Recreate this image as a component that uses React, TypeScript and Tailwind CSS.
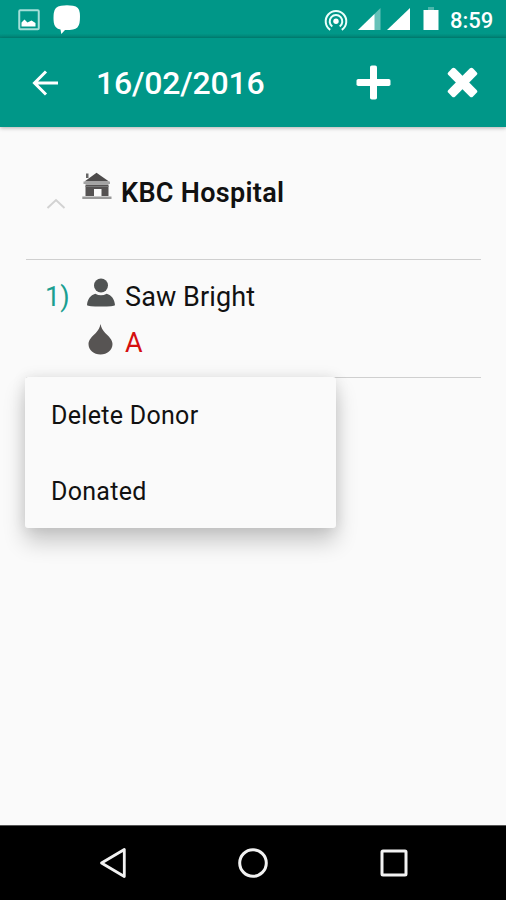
import { useState } from "react";

const menuItems = ['Delete Donor', 'Donated'];

const StatusBar = () => {
    return (
        <div className="flex h-[38px] items-start bg-linear-to-b from-[#009788] from-88% to-[#008376] pr-[12px] pl-[18px] text-white">
            <svg width="22" height="22" viewBox="0 0 22 22" className="mt-[9px]">
                <rect x="1.25" y="1.25" width="19.500" height="19" rx="1" fill="none" stroke="#a5e0d9" strokeWidth="2" />
                <path d="M3.500 17.500v-4l3-3 3 3 4-2 4 2.500v3.500z" fill="#fff" />
            </svg>
            <svg width="28" height="30" viewBox="0 0 28 30" className="mt-[5px] ml-[13px]">
                <path d="M8 .7Q14-.3 20 .7Q26.300 1.500 26.800 8Q27.300 13 26.500 18Q25.500 23.500 20 24.500Q15 25.300 12 25L8.300 29L7.500 24.500Q1.500 23.500.8 17.500Q.2 12.500.8 8Q1.500 1.700 8 .7z" fill="#fff" />
            </svg>
            <div className="grow" />
            <svg width="24" height="22" viewBox="0 0 24 22" className="mt-[9px]" fill="none" stroke="#eafffb" strokeWidth="2">
                <path d="M6.200 20.800A10.300 10.300 0 1 1 17.800 20.800" />
                <path d="M8.300 17.500A6.300 6.300 0 1 1 15.700 17.500" />
                <circle cx="12" cy="12.300" r="2.700" fill="#fff" stroke="none" />
            </svg>
            <svg width="23" height="22" viewBox="0 0 23 22" className="mt-[8px] ml-[10px]">
                <path d="M0 22L22.500 0V22z" fill="#66c1b8" />
                <path d="M0 22L16.500 6V22z" fill="#fff" />
            </svg>
            <svg width="23" height="22" viewBox="0 0 23 22" className="mt-[8px] ml-[6px]">
                <path d="M0 22L23 0V22z" fill="#fff" />
            </svg>
            <svg width="16" height="23" viewBox="0 0 16 23" className="mt-[7px] ml-[13px]">
                <path d="M5 0h6v3H5z" fill="#4db6ab" />
                <path d="M.5 3h15v20H.5z" fill="#fff" />
            </svg>
            <div className="mt-[7px] ml-[11px] w-[44px] text-[22px] leading-[27px] font-medium whitespace-nowrap">
                8:59
            </div>
        </div>
    );
}

const Toolbar = () => {
    return (
        <div className="relative flex h-[89px] items-center bg-[#009788] pl-[32px] text-white shadow-[0_1px_4px_rgba(0,0,0,0.3)]">
            <button aria-label="Back">
                <svg width="27" height="26" viewBox="0 0 27 26" fill="none" stroke="#fff" strokeWidth="3">
                    <path d="M26 13H2.500M14 1.500L2.500 13L14 24.500" />
                </svg>
            </button>
            <div className="mt-px ml-[37px] w-[170px] text-[32px] leading-9 font-medium tracking-[-0.2px] whitespace-nowrap">
                16/02/2016
            </div>
            <button aria-label="Add" className="ml-[90px]">
                <svg width="35" height="35" viewBox="0 0 35 35" fill="#fff">
                    <rect x="14" y=".5" width="7" height="34" rx="1.800" />
                    <rect x=".5" y="14" width="34" height="7" rx="1.800" />
                </svg>
            </button>
            <button aria-label="Close" className="ml-[56px]">
                <svg width="31" height="31" viewBox="0 0 31 31" fill="#fff">
                    <g transform="rotate(45 15.500 15.500)">
                        <rect x="10.800" y="-1.800" width="9.400" height="34.600" rx="2" />
                        <rect x="-1.800" y="10.800" width="34.600" height="9.400" rx="2" />
                    </g>
                </svg>
            </button>
        </div>
    );
}

const HospitalIcon = () => (
    <svg width="30" height="28" viewBox="0 0 30 28">
        <path d="M4 1.500h2.500V6H4z" fill="#666" />
        <path d="M14.500 .8L27 9.500H2.500z" fill="#4d4b4b" />
        <path d="M1.500 9.500h26.500V12h-26.500z" fill="#a3a3a3" />
        <path d="M3.500 12.500h23V24h-7v-7H12v7H3.500z" fill="#555252" />
        <path d="M3.500 14.500h23" stroke="#777" />
        <path d="M.3 24.500h29.200v2.500H.3z" fill="#999" />
    </svg>
)

const PersonIcon = () => (
    <svg width="28" height="29" viewBox="0 0 28 29" fill="#505353">
        <circle cx="14" cy="7.500" r="7" />
        <path d="M0 27.200C.3 21.500 3.500 17 8.300 15.700Q14 18.800 19.700 15.700C24.500 17 27.700 21.500 28 27.200Q27 28.500 14 28.500T0 27.200z" />
    </svg>
)

const DropIcon = () => (
    <svg width="26" height="31" viewBox="0 0 26 31" fill="#575453">
        <path d="M12.500 0C13.200 3.500 14.500 6 17.200 9C20.700 12.500 24.500 15.500 24.500 20C24.500 26.300 19.200 30.500 12.500 30.500S.5 26.300.5 20C.5 15.500 4.300 12.500 7.800 9C10.500 6 11.800 3.500 12.500 0z" />
    </svg>
)

const DonorMenu = ({ onSelect }: { onSelect: () => void }) => {
    return (
        <div className="absolute top-[117px] left-[-1px] w-[311px] rounded-[3px] bg-[#fafafa] shadow-[0_14px_22px_rgba(0,0,0,0.2),0_0_14px_rgba(0,0,0,0.1)]">
            {menuItems.map((item) => (
                <div
                    key={item}
                    onClick={(e) => {
                        e.stopPropagation();
                        onSelect();
                    }}
                    className="flex h-[75.5px] cursor-pointer items-center pt-[2px] pl-[26px] text-[25px] tracking-[0.3px] text-[#111]"
                >
                    {item}
                </div>
            ))}
        </div>
    );
}

const NavBar = () => {
    return (
        <div className="flex h-[75px] items-center justify-between border-t border-[#555] bg-black pr-[97px] pl-[99px]">
            <svg width="28" height="32" viewBox="0 0 28 32" fill="none" stroke="#f2f2f2" strokeWidth="2.800" strokeLinejoin="round">
                <path d="M25.300 2.500V29.500L2.500 16z" />
            </svg>
            <svg width="32" height="32" viewBox="0 0 32 32" fill="none" stroke="#f2f2f2" strokeWidth="3">
                <circle cx="16" cy="16" r="13.300" />
            </svg>
            <svg width="30" height="30" viewBox="0 0 30 30" fill="none" stroke="#f2f2f2" strokeWidth="3">
                <rect x="3" y="3" width="24" height="24" rx="1" />
            </svg>
        </div>
    );
}

const App = () => {
    const [menuOpen, setMenuOpen] = useState(true);

    return (
        <div className="flex h-[900px] w-[506px] flex-col overflow-hidden bg-[#fafafa] font-['Roboto','Liberation_Sans',sans-serif] text-[#111]">
            <StatusBar />
            <Toolbar />
            <div className="grow pr-[25px] pl-[26px]">
                <div className="flex h-[133px] items-start border-b border-[#cfcfcf] pl-[20px]">
                    <svg width="20" height="11" viewBox="0 0 20 11" className="mt-[71px]" fill="none" stroke="#d2d2d2" strokeWidth="2">
                        <path d="M1.500 10L10 2L18.500 10" />
                    </svg>
                    <div className="mt-[45px] ml-[16px]">
                        <HospitalIcon />
                    </div>
                    <div className="mt-[50px] ml-[9px] text-[27px] leading-8 font-semibold tracking-[0.3px] whitespace-nowrap">
                        KBC Hospital
                    </div>
                </div>
                <div className="relative h-[118px] border-b border-[#cfcfcf] pl-[19px]" onClick={() => setMenuOpen(true)}>
                    <div className="flex items-start pt-[18px] text-[27px] leading-9">
                        <div className="mt-[1px] w-[42px] text-[#1a9f91]">1)</div>
                        <PersonIcon />
                        <div className="mt-[1px] ml-[10px] tracking-[0.1px] whitespace-nowrap">Saw Bright</div>
                    </div>
                    <div className="mt-[9px] flex items-start pl-[43px] text-[27px] leading-9">
                        <DropIcon />
                        <div className="mt-[1px] ml-[11px] text-[#d50f0f]">A</div>
                    </div>
                    {menuOpen && <DonorMenu onSelect={() => setMenuOpen(false)} />}
                </div>
            </div>
            <NavBar />
        </div>
    );
}

export default App;
